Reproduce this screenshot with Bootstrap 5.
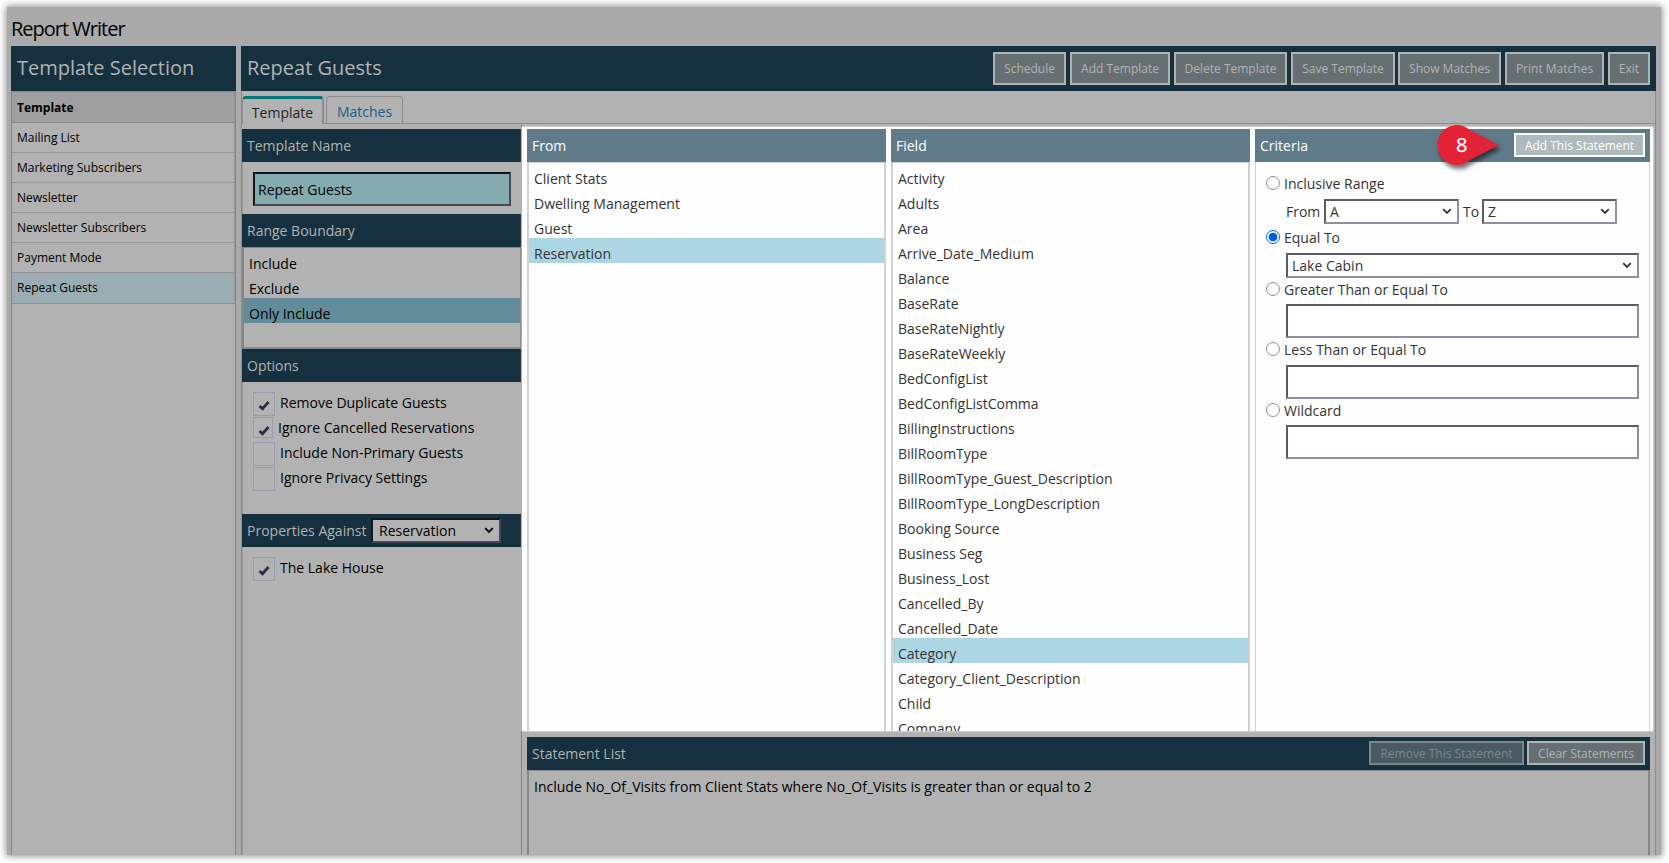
<!DOCTYPE html>
<html lang="en">
<head>
<meta charset="utf-8">
<meta name="viewport" content="width=device-width, initial-scale=1">
<title>Report Writer</title>
<link href="https://cdn.jsdelivr.net/npm/bootstrap@5.3.0/dist/css/bootstrap.min.css" rel="stylesheet">
<style>
  body { font: 14px/25px "Open Sans", sans-serif; background: #fff; color: #000; height: 863px; overflow: hidden; }
  .window { margin: 7px 8px 8px 7px; width: 1654px; height: 848px; background: #aaa; padding: 0 5px 0 4px; box-shadow: 0 0 7px 1px rgba(0,0,0,.45); }
  .app-title { height: 39px; font-size: 20px; line-height: 43px; letter-spacing: -1px; margin: 0; }
  .bar-lg { height: 45px; background: #15313f; color: #b2b2b2; font-size: 20px; line-height: 43px; padding: 0 6px; }
  .bar { height: 33px; background: #15313f; color: #b2b2b2; line-height: 34px; padding: 0 5px; white-space: nowrap; flex: none; }
  .bar.lit { background: #5f7b89; color: #fff; }
  .side { width: 225px; margin-right: 5px; }
  .side-body { background: #b2b2b2; border: 1px solid #878787; border-width: 0 1px; height: 764px; }
  .side-row { height: 30px; font-size: 12px; line-height: 30px; padding-left: 5px; border-bottom: 1px solid #969696; border-right: 1px solid #969696; color: #000; }
  .side-row.head { height: 31px; line-height: 31px; background: #9f9f9f; border-top: 1px solid #878787; border-bottom-color: #878787; font-weight: 700; margin-bottom: 0; height: 32px; }
  .side-row.on { height: 31px; background: #99adb2; border-bottom-color: #7d979d; }
  .main { width: 1415px; }
  .main-body { height: 764px; background: #b2b2b2; border-left: 1px solid #8d8d8d; border-right: 1px solid #8d8d8d; }
  .tabs { height: 33px; padding-top: 5px; border-bottom: 1px solid #8d8d8d; }
  .tab { border: 1px solid #8d8d8d; border-bottom: 0; border-radius: 4px 4px 0 0; line-height: 29px; text-align: center; color: #205c8c; width: 77px; height: 27px; }
  .tab.on { width: 82px; height: 28px; border-top: 3px solid #057479; border-right-width: 2px; color: #262626; background: #b2b2b2; margin-right: 2px; line-height: 28px; }
  .tbtn { border: 2px solid #b2b2b2; background: #667072; color: #b2b2b2; font-size: 12px; line-height: 30px; height: 33px; text-align: center; border-radius: 0; padding: 0; white-space: nowrap; }
  .tbtn.sm { height: 24px; line-height: 22px; }
  .tbtn.lit { border-color: #fff; background: #afbabd; color: #fff; }
  .tbtn.off { border-color: #7c868b; background: #4a5a62; color: #7c868b; }
  .left-col { width: 280px; border-right: 1px solid #878787; padding-top: 5px; height: 731px; }
  .left-col .pane { border-left: 1px solid #969696; }
  .field-in { border: 2px solid; border-color: #14141f #474757 #474757 #14141f; height: 34px; width: 258px; line-height: 32px; padding-left: 3px; background: #84abb0; }
  .opt-row { height: 25px; display: flex; padding-left: 10px; }
  .ck { width: 22px; height: 24px; border: 1px solid #9a9bac; margin-right: 5px; display: flex; align-items: flex-start; padding: 7px 0 0 4px; flex: none; }
  .ck.narrow { width: 20px; height: 21px; }
  .ck svg { flex: none; }
  .opt-row span { line-height: 22px; }
  .pick { height: 25px; border: 2px solid; border-color: #5c5b68 #8f8f9d #8f8f9d #5c5b68; background: #fff; color: #333; line-height: 22px; padding: 0 5px 0 4px; display: flex; justify-content: space-between; align-items: center; }
  .pick.dim { border-color: #14141f #474757 #474757 #14141f; background: #b2b2b2; color: #000; padding-left: 6px; }
  .txt { height: 34px; border: 2px solid; border-color: #5c5b68 #8f8f9d #8f8f9d #5c5b68; background: #fff; width: 353px; margin-left: 30px; }
  .spot { height: 604px; background: #fff; padding: 2px 3px 0 5px; box-shadow: 0 0 2px #fff; position: relative; color: #333; }
  .listing { border: 2px solid #d1d1d1; border-width: 1px 2px 0; flex: 1; overflow: hidden; background: #fefefe; }
  .item { height: 25px; line-height: 32px; padding-left: 5px; white-space: nowrap; }
  .item.on { background: #acd6e3; }
  .radio-row { height: 20px; display: flex; align-items: center; padding-left: 10px; }
  .rd { width: 14px; height: 14px; border: 1px solid #8f8f9d; border-radius: 50%; margin-right: 4px; flex: none; background: #fff; }
  .rd.on { border-color: #0060df; background: radial-gradient(circle, #0060df 0 4px, #fff 4.7px); }
  .marker { position: absolute; left: 908px; top: -6px; overflow: visible; }
</style>
</head>
<body>
<div class="window">
  <h1 class="app-title fw-normal">Report Writer</h1>
  <div class="d-flex">
    <aside class="side">
      <div class="bar-lg">Template Selection</div>
      <div class="side-body">
        <div class="side-row head">Template</div>
        <div class="side-row">Mailing List</div>
        <div class="side-row">Marketing Subscribers</div>
        <div class="side-row">Newsletter</div>
        <div class="side-row">Newsletter Subscribers</div>
        <div class="side-row">Payment Mode</div>
        <div class="side-row on">Repeat Guests</div>
      </div>
    </aside>
    <main class="main">
      <div class="bar-lg d-flex align-items-center">
        <span class="me-auto align-self-start">Repeat Guests</span>
        <div class="d-flex">
          <div class="tbtn me-1" style="width:73px">Schedule</div>
          <div class="tbtn me-1" style="width:100px">Add Template</div>
          <div class="tbtn me-1" style="width:113px">Delete Template</div>
          <div class="tbtn" style="width:104px;margin-right:3px">Save Template</div>
          <div class="tbtn me-1" style="width:103px">Show Matches</div>
          <div class="tbtn me-1" style="width:99px">Print Matches</div>
          <div class="tbtn" style="width:42px">Exit</div>
        </div>
      </div>
      <div class="main-body">
        <div class="tabs d-flex">
          <div class="tab on">Template</div>
          <div class="tab">Matches</div>
        </div>
        <div class="d-flex">
          <div class="left-col">
            <div class="bar">Template Name</div>
            <div class="pane" style="height:52px;padding:10px 0 0 10px"><div class="field-in">Repeat Guests</div></div>
            <div class="bar">Range Boundary</div>
            <div class="pane" style="height:102px;border:2px solid #878787;border-width:1px 1px 2px 2px">
              <div class="item">Include</div>
              <div class="item">Exclude</div>
              <div class="item" style="background:#628c99">Only Include</div>
            </div>
            <div class="bar">Options</div>
            <div class="pane" style="height:132px;padding-top:10px">
              <div class="opt-row"><i class="ck"><svg width="12" height="11" viewBox="0 0 12 11"><path d="M1.500 6 4.500 8.700 10.500 2" fill="none" stroke="#2a2d45" stroke-width="2.800"/></svg></i><span>Remove Duplicate Guests</span></div>
              <div class="opt-row"><i class="ck narrow"><svg width="12" height="11" viewBox="0 0 12 11"><path d="M1.500 6 4.500 8.700 10.500 2" fill="none" stroke="#2a2d45" stroke-width="2.800"/></svg></i><span>Ignore Cancelled Reservations</span></div>
              <div class="opt-row"><i class="ck"></i><span>Include Non-Primary Guests</span></div>
              <div class="opt-row"><i class="ck"></i><span>Ignore Privacy Settings</span></div>
            </div>
            <div class="bar d-flex">
              <span>Properties Against</span>
              <div class="pick dim ms-auto mt-1" style="width:130px;margin-right:15px"><span>Reservation</span><svg width="10" height="7" viewBox="0 0 10 7"><path d="M1.200 1.200 5 5 8.800 1.200" fill="none" stroke="#000" stroke-width="1.800"/></svg></div>
            </div>
            <div class="pane" style="height:308px;padding-top:10px">
              <div class="opt-row"><i class="ck"><svg width="12" height="11" viewBox="0 0 12 11"><path d="M1.500 6 4.500 8.700 10.500 2" fill="none" stroke="#2a2d45" stroke-width="2.800"/></svg></i><span>The Lake House</span></div>
            </div>
          </div>
          <div style="width:1133px;padding-top:3px">
            <div class="spot d-flex" style="width:1131px">
              <div class="d-flex flex-column" style="width:359px;margin-right:5px">
                <div class="bar lit">From</div>
                <div class="listing">
                  <div class="item">Client Stats</div>
                  <div class="item">Dwelling Management</div>
                  <div class="item">Guest</div>
                  <div class="item on">Reservation</div>
                </div>
              </div>
              <div class="d-flex flex-column" style="width:359px;margin-right:5px">
                <div class="bar lit">Field</div>
                <div class="listing">
                  <div class="item">Activity</div>
                  <div class="item">Adults</div>
                  <div class="item">Area</div>
                  <div class="item">Arrive_Date_Medium</div>
                  <div class="item">Balance</div>
                  <div class="item">BaseRate</div>
                  <div class="item">BaseRateNightly</div>
                  <div class="item">BaseRateWeekly</div>
                  <div class="item">BedConfigList</div>
                  <div class="item">BedConfigListComma</div>
                  <div class="item">BillingInstructions</div>
                  <div class="item">BillRoomType</div>
                  <div class="item">BillRoomType_Guest_Description</div>
                  <div class="item">BillRoomType_LongDescription</div>
                  <div class="item">Booking Source</div>
                  <div class="item">Business Seg</div>
                  <div class="item">Business_Lost</div>
                  <div class="item">Cancelled_By</div>
                  <div class="item">Cancelled_Date</div>
                  <div class="item on">Category</div>
                  <div class="item">Category_Client_Description</div>
                  <div class="item">Child</div>
                  <div class="item">Company</div>
                </div>
              </div>
              <div class="d-flex flex-column" style="width:395px">
                <div class="bar lit d-flex">
                  <span class="me-auto">Criteria</span>
                  <div class="tbtn sm lit mt-1" style="width:131px">Add This Statement</div>
                </div>
                <div class="listing" style="border-width:0 1px;padding-top:11px">
                  <div class="radio-row"><i class="rd"></i>Inclusive Range</div>
                  <div class="d-flex" style="margin:6px 0 0 30px;height:25px">
                    <span style="width:38px">From</span>
                    <div class="pick" style="width:135px"><span>A</span><svg width="10" height="7" viewBox="0 0 10 7"><path d="M1.200 1.200 5 5 8.800 1.200" fill="none" stroke="#333" stroke-width="1.800"/></svg></div>
                    <span style="width:23px;padding-left:4px">To</span>
                    <div class="pick" style="width:135px"><span>Z</span><svg width="10" height="7" viewBox="0 0 10 7"><path d="M1.200 1.200 5 5 8.800 1.200" fill="none" stroke="#333" stroke-width="1.800"/></svg></div>
                  </div>
                  <div class="radio-row" style="margin-top:3px"><i class="rd on"></i>Equal To</div>
                  <div class="pick" style="width:353px;margin:6px 0 0 30px"><span>Lake Cabin</span><svg width="10" height="7" viewBox="0 0 10 7"><path d="M1.200 1.200 5 5 8.800 1.200" fill="none" stroke="#333" stroke-width="1.800"/></svg></div>
                  <div class="radio-row" style="margin-top:1px"><i class="rd"></i>Greater Than or Equal To</div>
                  <div class="txt" style="margin-top:5px"></div>
                  <div class="radio-row" style="margin-top:1px"><i class="rd"></i>Less Than or Equal To</div>
                  <div class="txt" style="margin-top:6px"></div>
                  <div class="radio-row" style="margin-top:1px"><i class="rd"></i>Wildcard</div>
                  <div class="txt" style="margin-top:5px"></div>
                </div>
              </div>
              <svg class="marker" width="70" height="50" viewBox="0 0 70 50">
                <path d="M27 4C16 4 7.500 13 7.500 24S16 44 27 44C34 44 36 41 41 38.500L69 24 41 9.500C36 7 34 4 27 4Z" fill="#e42237" style="filter:drop-shadow(2px 4px 2px rgba(0,0,0,.55))"/>
                <text x="31.700" y="31.300" text-anchor="middle" font-size="20" fill="#fff" stroke="#fff" stroke-width=".3" font-family="Open Sans, sans-serif">8</text>
              </svg>
            </div>
            <div style="margin:6px 0 0 5px;width:1123px">
              <div class="bar d-flex">
                <span class="me-auto">Statement List</span>
                <div class="tbtn sm off mt-1" style="width:155px;margin-right:3px">Remove This Statement</div>
                <div class="tbtn sm mt-1" style="width:118px">Clear Statements</div>
              </div>
              <div style="height:85px;border:2px solid #878787;border-width:1px 2px 0"><div class="item">Include No_Of_Visits from Client Stats where No_Of_Visits is greater than or equal to 2</div></div>
            </div>
          </div>
        </div>
      </div>
    </main>
  </div>
</div>
<script src="https://cdn.jsdelivr.net/npm/bootstrap@5.3.0/dist/js/bootstrap.bundle.min.js"></script>
</body>
</html>
